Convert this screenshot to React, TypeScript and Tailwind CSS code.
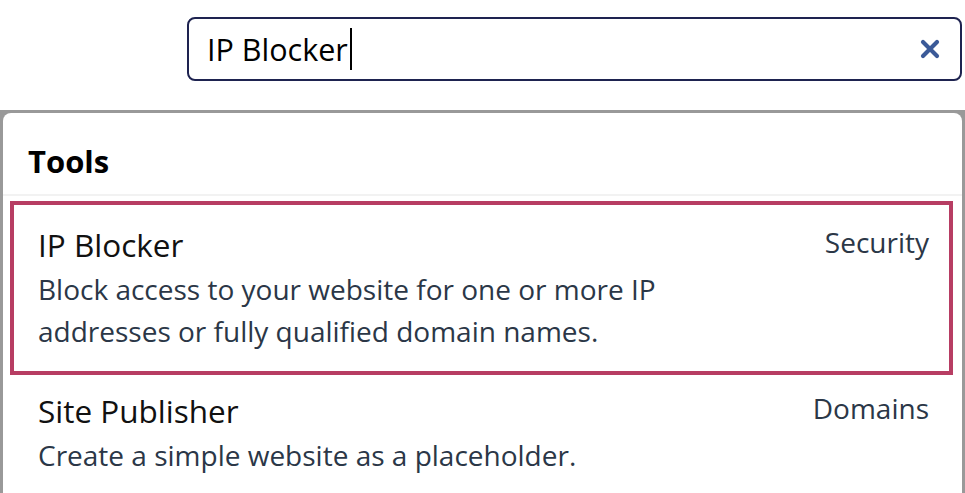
import React from 'react';

interface ToolItem {
  title: string;
  category: string;
  description: string;
}

const items: ToolItem[] = [
  {
    title: 'IP Blocker',
    category: 'Security',
    description: 'Block access to your website for one or more IP addresses or fully qualified domain names.',
  },
  {
    title: 'Site Publisher',
    category: 'Domains',
    description: 'Create a simple website as a placeholder.',
  },
];

const ClearIcon = () => (
  <svg width="20" height="20" viewBox="0 0 20 20" className="shrink-0">
    <path d="M3 3 L17 17 M17 3 L3 17" stroke="#3b5a98" strokeWidth="4.2" strokeLinecap="round" />
  </svg>
);

const App: React.FC = () => {
  const selected = 0;

  return (
    <div className="w-[965px] h-[493px] overflow-hidden bg-white font-['Open_Sans',sans-serif]">
      <div className="pt-[17px] pl-[187px] pr-[3px]">
        <div className="h-[64px] border-2 border-[#1e2350] rounded-[8px] flex items-center pl-[18px] pr-[20px]">
          <span className="text-[30.5px] leading-none text-black">IP Blocker</span>
          <span className="w-[2px] h-[42px] bg-black ml-[2px]" />
          <div className="flex-1" />
          <ClearIcon />
        </div>
      </div>

      <div className="mt-[29px] bg-[#999999] px-[3px] pt-[3px] h-[383px]">
        <div className="bg-white rounded-t-[8px] h-full">
          <div className="pl-[25px] pt-[28px] pb-[13px]">
            <h2 className="text-[31px] leading-[40px] font-bold text-black">Tools</h2>
          </div>
          <div className="h-[2px] bg-[#f2f2f2]" />
          <ul className="pt-[9px] pl-[11px] pr-[13px]">
            {items.map((item, i) => (
              <li
                key={item.title}
                className={
                  i === selected
                    ? 'pl-[24px] pr-[20px] pt-[20px] pb-[19px] outline-4 outline-[#b73d63]'
                    : 'pl-[24px] pr-[20px] pt-[20px] pb-[19px]'
                }
              >
                <div className="flex justify-between items-start">
                  <span className="text-[31.5px] leading-[40px] text-[#111]">{item.title}</span>
                  <span className="text-[28px] leading-[40px] text-[#2b3747] -mt-[3px]">{item.category}</span>
                </div>
                <p className="mt-[3px] max-w-[660px] text-[28px] leading-[42px] text-[#2b3747]">
                  {item.description}
                </p>
              </li>
            ))}
          </ul>
        </div>
      </div>
    </div>
  );
};

export default App;
